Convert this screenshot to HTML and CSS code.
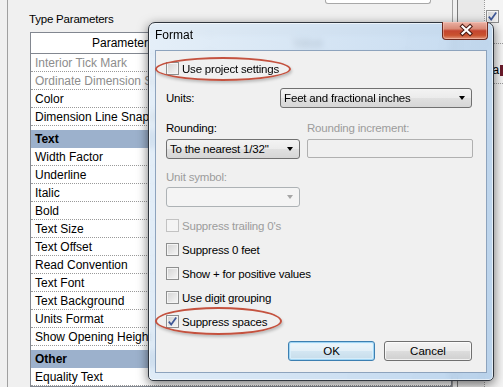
FILE: index.html
```html
<!DOCTYPE html>
<html lang="en">
<head>
  <meta charset="UTF-8" />
  <title>Type Properties | Format</title>
  <link rel="stylesheet" href="styles.css">
</head>
<body>
  <div class="desktop">
    <div class="rail"></div>

    <div class="main">
      <div class="type-box"></div>
      <div class="section-label">Type Parameters</div>

      <div class="grid">
        <div class="grid-head"><span>Parameter</span><span>Value</span><span></span></div>
        <div class="row dim"><span class="c1">Interior Tick Mark</span></div>
        <div class="row dim"><span class="c1">Ordinate Dimension Settings</span></div>
        <div class="row"><span class="c1">Color</span></div>
        <div class="row"><span class="c1">Dimension Line Snap Distance</span></div>
        <div class="group">Text</div>
        <div class="row"><span class="c1">Width Factor</span></div>
        <div class="row"><span class="c1">Underline</span></div>
        <div class="row"><span class="c1">Italic</span></div>
        <div class="row"><span class="c1">Bold</span></div>
        <div class="row"><span class="c1">Text Size</span></div>
        <div class="row"><span class="c1">Text Offset</span></div>
        <div class="row"><span class="c1">Read Convention</span></div>
        <div class="row"><span class="c1">Text Font</span></div>
        <div class="row"><span class="c1">Text Background</span></div>
        <div class="row"><span class="c1">Units Format</span></div>
        <div class="row"><span class="c1">Show Opening Height</span></div>
        <div class="group">Other</div>
        <div class="row"><span class="c1">Equality Text</span></div>
      </div>
    </div>

    <div class="side">
      <div class="side-inner">
        <div class="side-col">
          <div class="side-cell">
            <span class="box checked">
              <svg width="11" height="11" viewBox="0 0 11 11"><path d="M1.8 5.6 L4.2 8.6 L9.2 1.6" fill="none" stroke="#3f5897" stroke-width="1.7"/></svg>
            </span>
          </div>
          <div class="side-cell text"><span>a</span><span class="mark"></span></div>
        </div>
      </div>
    </div>
  </div>

  <!-- Format dialog -->
  <div class="dialog">
    <div class="titlebar">
      <span class="title">Format</span>
      <div class="close">
        <svg width="46" height="18" viewBox="0 0 46 18">
          <path d="M19.5 5.5 L27 12.5 M27 5.5 L19.5 12.5" stroke="#4a1a12" stroke-width="4.2" stroke-linecap="square"/>
          <path d="M19.5 5.5 L27 12.5 M27 5.5 L19.5 12.5" stroke="#ffffff" stroke-width="2.2" stroke-linecap="square"/>
        </svg>
      </div>
    </div>

    <div class="client">
      <div class="check-row circled first">
        <span class="box"></span><span>Use project settings</span>
      </div>

      <div class="units-row">
        <span class="units-label">Units:</span>
        <div class="combo wide">Feet and fractional inches</div>
      </div>

      <div class="labels-row">
        <span>Rounding:</span>
        <span class="disabled">Rounding increment:</span>
      </div>
      <div class="combo-row">
        <div class="combo">To the nearest 1/32"</div>
        <div class="input off"></div>
      </div>

      <div class="plain-label disabled">Unit symbol:</div>
      <div class="combo off narrow"></div>

      <div class="check-row checks-start">
        <span class="box off"></span><span class="disabled">Suppress trailing 0's</span>
      </div>
      <div class="check-row">
        <span class="box"></span><span>Suppress 0 feet</span>
      </div>
      <div class="check-row">
        <span class="box"></span><span>Show + for positive values</span>
      </div>
      <div class="check-row">
        <span class="box"></span><span>Use digit grouping</span>
      </div>
      <div class="check-row circled second">
        <span class="box checked">
          <svg width="11" height="11" viewBox="0 0 11 11"><path d="M1.8 5.6 L4.2 8.6 L9.2 1.6" fill="none" stroke="#3f5897" stroke-width="1.7"/></svg>
        </span><span>Suppress spaces</span>
      </div>

      <div class="buttons">
        <button class="btn default">OK</button>
        <button class="btn">Cancel</button>
      </div>
    </div>
  </div>
</body>
</html>
```

FILE: styles.css
```css
body {
  margin: 0;
  width: 503px;
  height: 387px;
  overflow: hidden;
  position: relative;
  background: #f0f0f0;
  font-family: "Liberation Sans", Arial, sans-serif;
  font-size: 11.5px;
  letter-spacing: -0.2px;
  color: #000;
}

/* Type properties window behind */
.desktop {
  display: flex;
  height: 387px;
}

.rail {
  width: 7px;
  border-right: 1px solid #a0a0a0;
}

.main {
  width: 445px;
}

.type-box {
  margin-left: 317px;
  width: 104px;
  height: 3px;
  border: 1px solid #a8a8a8;
  border-top: none;
  border-radius: 0 0 3px 3px;
  background: #fff;
}

.section-label {
  margin: 8px 0 0 21px;
  line-height: 14px;
  font-size: 11.5px;
}

.grid {
  margin: 6px 0 0 22px;
  border: 1px solid #828790;
  background: #fff;
  font-size: 12px;
  letter-spacing: 0;
}

.grid-head {
  display: grid;
  grid-template-columns: 179px 197px 1fr;
  height: 20px;
  border-bottom: 1px solid #828790;
  align-items: center;
  text-align: center;
}

.grid-head span {
  border-right: 1px solid #d5d5d5;
  line-height: 20px;
}

.row {
  height: 17px;
  border-bottom: 1px dotted #9a9a9a;
  display: flex;
  align-items: center;
}

.row .c1 {
  width: 175px;
  padding-left: 4px;
  white-space: nowrap;
  overflow: hidden;
}

.row.dim {
  color: #8d8d8d;
}

.group {
  margin-top: 4px;
  height: 18px;
  line-height: 18px;
  padding-left: 4px;
  background: #9cb1cc;
  font-weight: bold;
}

.side {
  flex: 1;
  display: flex;
  border-left: 1px solid #a0a0a0;
}

.side-inner {
  flex: 1;
  margin-left: 4px;
  border-left: 1px solid #7b7b7b;
  background: #e9e9e9;
  padding-left: 26px;
}

.side-col {
  height: 100%;
  border-left: 1px dotted #9a9a9a;
  background: #f4f4f4;
}

.side-cell {
  height: 44px;
  border-bottom: 1px dotted #9a9a9a;
  padding: 10px 0 0 1px;
  box-sizing: border-box;
}

.side-cell.text {
  height: 40px;
  padding: 19px 0 0 8px;
  display: flex;
  align-items: flex-start;
  font-size: 12px;
}

.side-cell .mark {
  width: 3px;
  height: 11px;
  margin: 2px 0 0 1px;
  background: #6a1a2a;
}

/* Format dialog */
.dialog {
  position: absolute;
  left: 148px;
  top: 22px;
  width: 346px;
  height: 359px;
  box-sizing: border-box;
  display: flex;
  flex-direction: column;
  border: 1px solid #2f353d;
  border-radius: 7px 7px 5px 5px;
  background: linear-gradient(100deg, rgba(224, 236, 247, 0.84), rgba(198, 219, 240, 0.84) 60%, rgba(176, 205, 234, 0.86));
  backdrop-filter: blur(3px);
  box-shadow: 0 3px 11px rgba(0, 0, 0, 0.55), inset 0 0 0 1px rgba(255, 255, 255, 0.6);
}

.titlebar {
  height: 27px;
  position: relative;
  display: flex;
  align-items: center;
  padding: 0 0 3px 6px;
  box-sizing: border-box;
  font-size: 12px;
  letter-spacing: 0;
}

.close {
  position: absolute;
  right: 5px;
  top: -1px;
  width: 46px;
  height: 18px;
  box-sizing: border-box;
  border: 1px solid #6b2a20;
  border-top: none;
  border-radius: 0 0 4px 4px;
  background: linear-gradient(#eab1a4, #d98a77 40%, #c4452f 52%, #c9522f 78%, #e1957a);
  box-shadow: inset 0 0 0 1px rgba(255, 210, 200, 0.45);
}

.close svg {
  display: block;
  margin-top: -1px;
}

.client {
  flex: 1;
  margin: 0 6px 7px;
  border: 1px solid #8da3bd;
  background: #f0f0f0;
  padding: 0 14px 0 10px;
}

.disabled {
  color: #9c9c9c;
}

.check-row {
  display: flex;
  align-items: center;
  gap: 3px;
  height: 13px;
  margin-top: 11px;
  position: relative;
  white-space: nowrap;
}

.check-row.first {
  margin-top: 11px;
}

.check-row.checks-start {
  margin-top: 12px;
}

.circled::before {
  content: '';
  position: absolute;
  left: -11px;
  box-sizing: border-box;
  border: 2px solid #c4523f;
  border-radius: 50%;
  box-shadow: 1px 2px 3px rgba(0, 0, 0, 0.22);
}

.circled.first::before {
  top: -5px;
  width: 136px;
  height: 24px;
}

.circled.second::before {
  top: -8px;
  width: 127px;
  height: 28px;
}

.box {
  width: 13px;
  height: 13px;
  box-sizing: border-box;
  flex-shrink: 0;
  border: 1px solid #8e8f8f;
  background: linear-gradient(135deg, #d3d3d3, #f6f6f6);
  box-shadow: inset 0 0 0 1px #f4f4f4;
  display: flex;
  align-items: center;
  justify-content: center;
}

.box.off {
  border-color: #c2c2c2;
  background: #f4f4f4;
  box-shadow: none;
}

.box.checked svg {
  display: block;
}

.units-row {
  display: flex;
  align-items: center;
  margin-top: 13px;
}

.units-label {
  width: 116px;
}

.combo {
  height: 20px;
  box-sizing: border-box;
  position: relative;
  display: flex;
  align-items: center;
  padding-left: 3px;
  border: 1px solid #707070;
  border-radius: 3px;
  background: linear-gradient(#f3f3f3, #ebebeb 50%, #e0e0e0 51%, #d6d6d6);
  white-space: nowrap;
}

.combo::after {
  content: '';
  position: absolute;
  right: 6px;
  top: 7px;
  border-left: 3.5px solid transparent;
  border-right: 3.5px solid transparent;
  border-top: 4px solid #000;
}

.combo.wide {
  width: 195px;
}

.combo.off {
  border-color: #adb2b5;
  background: #f4f4f4;
}

.combo.off::after {
  border-top-color: #a6a6a6;
}

.combo.narrow {
  width: 134px;
  margin-top: 3px;
}

.labels-row {
  display: grid;
  grid-template-columns: 141px 1fr;
  height: 14px;
  line-height: 14px;
  margin-top: 13px;
}

.combo-row {
  display: grid;
  grid-template-columns: 134px 166px;
  gap: 7px;
  margin-top: 4px;
  align-items: start;
}

.input {
  height: 19px;
  box-sizing: border-box;
  border: 1px solid #b0b0b0;
  border-radius: 2px;
}

.plain-label {
  height: 14px;
  line-height: 14px;
  margin-top: 11px;
}

.buttons {
  display: flex;
  justify-content: flex-end;
  gap: 9px;
  margin-top: 13px;
}

.btn {
  width: 87px;
  height: 20px;
  padding: 0;
  box-sizing: border-box;
  font: inherit;
  color: #000;
  border: 1px solid #707070;
  border-radius: 3px;
  background: linear-gradient(#f3f3f3, #ebebeb 50%, #dddddd 51%, #cfcfcf);
  box-shadow: inset 0 0 0 1px rgba(255, 255, 255, 0.7);
}

.btn + .btn {
  width: 88px;
}

.btn.default {
  border-color: #3c7fb1;
  box-shadow: inset 0 0 0 1px #9fd4f3, inset 0 0 0 2px rgba(220, 242, 255, 0.7);
  background: linear-gradient(#eef6fb, #e2eff7 50%, #d3e6f2 51%, #c6dcea);
}
```
